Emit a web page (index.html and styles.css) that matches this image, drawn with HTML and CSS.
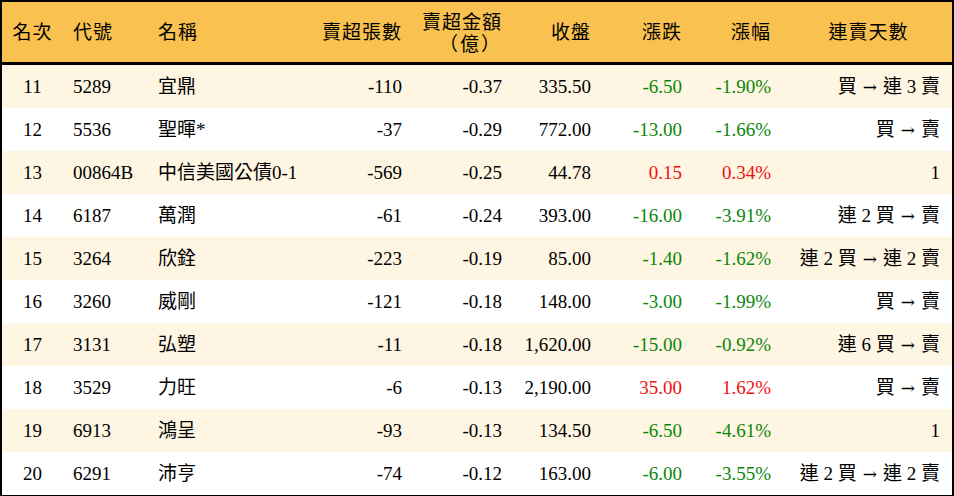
FILE: index.html
```html
<!DOCTYPE html>
<html lang="zh-Hant">
<head>
<meta charset="utf-8">
<title>賣超排行</title>
<link rel="stylesheet" href="styles.css">
</head>
<body>
<table class="rank">
  <colgroup>
    <col class="c-rank"><col class="c-code"><col class="c-name"><col class="c-vol"><col class="c-amt"><col class="c-close"><col class="c-chg"><col class="c-pct"><col class="c-days">
  </colgroup>
  <thead>
    <tr>
      <th class="center">名次</th>
      <th class="left">代號</th>
      <th class="left">名稱</th>
      <th class="right">賣超張數</th>
      <th class="right two"><span class="line">賣超金額</span><span class="line unit">（億）</span></th>
      <th class="right">收盤</th>
      <th class="right">漲跌</th>
      <th class="right">漲幅</th>
      <th class="center days-h">連賣天數</th>
    </tr>
  </thead>
  <tbody>
    <tr class="odd"><td class="center">11</td><td>5289</td><td>宜鼎</td><td class="right">-110</td><td class="right">-0.37</td><td class="right">335.50</td><td class="right down">-6.50</td><td class="right down">-1.90%</td><td class="right">買<span class="arrow">→</span>連 3 賣</td></tr>
    <tr><td class="center">12</td><td>5536</td><td>聖暉*</td><td class="right">-37</td><td class="right">-0.29</td><td class="right">772.00</td><td class="right down">-13.00</td><td class="right down">-1.66%</td><td class="right">買<span class="arrow">→</span>賣</td></tr>
    <tr class="odd"><td class="center">13</td><td>00864B</td><td>中信美國公債0-1</td><td class="right">-569</td><td class="right">-0.25</td><td class="right">44.78</td><td class="right up">0.15</td><td class="right up">0.34%</td><td class="right">1</td></tr>
    <tr><td class="center">14</td><td>6187</td><td>萬潤</td><td class="right">-61</td><td class="right">-0.24</td><td class="right">393.00</td><td class="right down">-16.00</td><td class="right down">-3.91%</td><td class="right">連 2 買<span class="arrow">→</span>賣</td></tr>
    <tr class="odd"><td class="center">15</td><td>3264</td><td>欣銓</td><td class="right">-223</td><td class="right">-0.19</td><td class="right">85.00</td><td class="right down">-1.40</td><td class="right down">-1.62%</td><td class="right">連 2 買<span class="arrow">→</span>連 2 賣</td></tr>
    <tr><td class="center">16</td><td>3260</td><td>威剛</td><td class="right">-121</td><td class="right">-0.18</td><td class="right">148.00</td><td class="right down">-3.00</td><td class="right down">-1.99%</td><td class="right">買<span class="arrow">→</span>賣</td></tr>
    <tr class="odd"><td class="center">17</td><td>3131</td><td>弘塑</td><td class="right">-11</td><td class="right">-0.18</td><td class="right">1,620.00</td><td class="right down">-15.00</td><td class="right down">-0.92%</td><td class="right">連 6 買<span class="arrow">→</span>賣</td></tr>
    <tr><td class="center">18</td><td>3529</td><td>力旺</td><td class="right">-6</td><td class="right">-0.13</td><td class="right">2,190.00</td><td class="right up">35.00</td><td class="right up">1.62%</td><td class="right">買<span class="arrow">→</span>賣</td></tr>
    <tr class="odd"><td class="center">19</td><td>6913</td><td>鴻呈</td><td class="right">-93</td><td class="right">-0.13</td><td class="right">134.50</td><td class="right down">-6.50</td><td class="right down">-4.61%</td><td class="right">1</td></tr>
    <tr><td class="center">20</td><td>6291</td><td>沛亨</td><td class="right">-74</td><td class="right">-0.12</td><td class="right">163.00</td><td class="right down">-6.00</td><td class="right down">-3.55%</td><td class="right">連 2 買<span class="arrow">→</span>連 2 賣</td></tr>
  </tbody>
</table>
</body>
</html>
```
FILE: styles.css
```css
html, body {
  margin: 0;
  padding: 0;
  background: #ffffff;
}

.rank {
  width: 954px;
  table-layout: fixed;
  border-collapse: separate;
  border-spacing: 0;
  border: 2px solid #000;
  font-family: "Liberation Serif", "Noto Sans CJK TC", serif;
  font-size: 19px;
  color: #000;
}

.c-rank { width: 61px; }
.c-code { width: 85px; }
.c-name { width: 164px; }
.c-vol { width: 100px; }
.c-amt { width: 100px; }
.c-close { width: 89px; }
.c-chg { width: 91px; }
.c-pct { width: 89px; }
.c-days { width: 171px; }

.rank th {
  height: 59px;
  padding: 0 10px;
  background: #f9c14f;
  border-bottom: 3px solid #000;
  font-weight: normal;
  vertical-align: middle;
  white-space: nowrap;
  line-height: 21px;
  letter-spacing: 1px;
}

.rank th.two {
  padding-top: 1px;
}

.rank th .line {
  display: block;
  height: 20px;
  line-height: 20px;
}

.rank th .unit {
  font-family: "Noto Sans CJK TC", sans-serif;
  letter-spacing: 2px;
  font-feature-settings: "fwid" 1;
}

.rank th.days-h {
  padding-left: 16px;
}

.rank td {
  height: 43px;
  padding: 0 10px;
  vertical-align: middle;
  white-space: nowrap;
  line-height: 21px;
}

.rank td:last-child,
.rank th:last-child {
  padding-right: 12px;
}

.arrow {
  font-family: "DejaVu Serif", serif;
  font-size: 17px;
  margin: 0 6px;
}

.rank tr.odd td {
  background: #fef5e2;
}

.left { text-align: left; }
.right { text-align: right; }
.center { text-align: center; }

.down { color: #0a870a; }
.up { color: #f01010; }
```
